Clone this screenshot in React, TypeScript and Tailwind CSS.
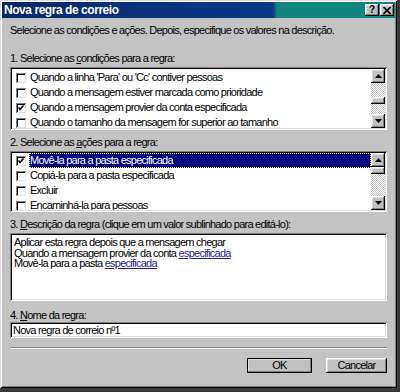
import React from 'react';

const raised =
  'shadow-[inset_-1px_-1px_#000,inset_1px_1px_#fff,inset_-2px_-2px_#808080,inset_2px_2px_#dfdfdf]';
const sunken =
  'shadow-[inset_1px_1px_#808080,inset_-1px_-1px_#fff,inset_2px_2px_#000,inset_-2px_-2px_#dfdfdf]';

function Check({ checked }: { checked?: boolean }) {
  return (
    <span className="relative mr-[3px] h-[10px] w-[10px] shrink-0 bg-white shadow-[inset_1px_1px_#808080,inset_-1px_-1px_#dfdfdf,inset_2px_2px_#000]">
      {checked && (
        <svg viewBox="0 0 10 10" className="absolute left-0 top-0 h-[10px] w-[10px]">
          <path d="M2.5 4.5 L4 6.5 L7.5 2.5" fill="none" stroke="#000" strokeWidth="1.6" />
        </svg>
      )}
    </span>
  );
}

function Arrow({ up }: { up?: boolean }) {
  return (
    <div className={`flex h-[14px] w-[14px] items-center justify-center bg-[#c0c0c0] ${raised}`}>
      <svg viewBox="0 0 7 4" className="h-[4px] w-[7px]">
        <path d={up ? 'M0 4 L3.5 0 L7 4 Z' : 'M0 0 L3.5 4 L7 0 Z'} fill="#000" />
      </svg>
    </div>
  );
}

function ScrollBar({ thumbTop }: { thumbTop: number }) {
  return (
    <div className="flex w-[14px] shrink-0 flex-col bg-[#e6e6e6] bg-[repeating-conic-gradient(#fff_0_25%,#c0c0c0_0_50%)] bg-[length:2px_2px]">
      <Arrow up />
      <div className="flex-1" style={{ paddingTop: thumbTop }}>
        <div className={`h-[7px] w-[14px] bg-[#c0c0c0] ${raised}`} />
      </div>
      <Arrow />
    </div>
  );
}

function Row({ text, checked, selected }: { text: string; checked?: boolean; selected?: boolean }) {
  return (
    <div className="flex h-[15px] items-center pl-[4px]">
      <Check checked={checked} />
      <span
        className={`flex h-[15px] flex-1 items-center whitespace-nowrap pl-[1px] ${
          selected ? 'bg-[#000080] text-white outline-1 outline-dotted outline-[#ffff80] -outline-offset-1' : ''
        }`}
      >
        {text}
      </span>
    </div>
  );
}

function Label({ n, before, key1, after }: { n: string; before: string; key1: string; after: string }) {
  return (
    <div className="h-[12px] leading-[12px]">
      {n} {before}
      <span className="underline underline-offset-1">{key1}</span>
      {after}
    </div>
  );
}

export default function App() {
  return (
    <div className="h-[392px] w-[400px] overflow-hidden bg-[#3a3a3a] font-['Liberation_Sans',Arial,sans-serif] text-[11px] tracking-[-0.75px] text-black">
      <div className="flex h-[388px] w-[397px] flex-col bg-[#c3c3c3] shadow-[inset_1px_1px_#dfdfdf,inset_-1px_-1px_#000,inset_2px_2px_#fff,inset_-2px_-2px_#808080]">
        {/* barra de título */}
        <div className="mx-[2px] mt-[2px] flex h-[16px] items-center justify-between bg-[linear-gradient(to_right,#082468_0%,#0a2e78_25%,#0a3a82_69%,#118480_70%,#118480_100%)] pl-[2px] pr-[1px]">
          <span className="text-[12px] font-bold tracking-[-0.45px] text-white">Nova regra de correio</span>
          <div className="flex gap-[1px]">
            <div className={`flex h-[12px] w-[14px] items-center justify-center bg-[#c0c0c0] text-[10px] font-bold leading-none tracking-normal ${raised}`}>
              ?
            </div>
            <div className={`flex h-[12px] w-[14px] items-center justify-center bg-[#c0c0c0] ${raised}`}>
              <svg viewBox="0 0 8 7" className="h-[7px] w-[8px]">
                <path d="M0.5 0 L7.5 7 M7.5 0 L0.5 7" stroke="#000" strokeWidth="1.6" />
              </svg>
            </div>
          </div>
        </div>

        <div className="flex flex-1 flex-col pl-[10px] pr-[10px]">
          <div className="mt-[6px] h-[12px] leading-[12px]">
            Selecione as condições e ações. Depois, especifique os valores na descrição.
          </div>

          <div className="mt-[16px]">
            <Label n="1." before="Selecione as " key1="c" after="ondições para a regra:" />
          </div>
          <div className={`mt-[3px] flex h-[63px] bg-white p-[2px] ${sunken}`}>
            <div className="flex-1 overflow-hidden pt-[1px]">
              <Row text="Quando a linha 'Para' ou 'Cc' contiver pessoas" />
              <Row text="Quando a mensagem estiver marcada como prioridade" />
              <Row text="Quando a mensagem provier da conta especificada" checked />
              <Row text="Quando o tamanho da mensagem for superior ao tamanho" />
            </div>
            <ScrollBar thumbTop={14} />
          </div>

          <div className="mt-[6px]">
            <Label n="2." before="Selecione as " key1="a" after="ções para a regra:" />
          </div>
          <div className={`mt-[3px] flex h-[61px] bg-white p-[2px] ${sunken}`}>
            <div className="flex-1 overflow-hidden">
              <Row text="Movê-la para a pasta especificada" checked selected />
              <Row text="Copiá-la para a pasta especificada" />
              <Row text="Excluir" />
              <Row text="Encaminhá-la para pessoas" />
            </div>
            <ScrollBar thumbTop={0} />
          </div>

          <div className="mt-[6px] h-[12px] leading-[12px]">
            3. <span className="underline underline-offset-1">D</span>escrição da regra (clique em um valor sublinhado para
            editá-lo):
          </div>
          <div className={`mt-[3px] h-[68px] bg-white px-[4px] pt-[4px] leading-[10.5px] ${sunken}`}>
            <div>Aplicar esta regra depois que a mensagem chegar</div>
            <div>
              Quando a mensagem provier da conta{' '}
              <span className="text-[#1c1c9c] underline">especificada</span>
            </div>
            <div>
              Movê-la para a pasta <span className="text-[#1c1c9c] underline">especificada</span>
            </div>
          </div>

          <div className="mt-[8px]">
            <Label n="4." before="" key1="N" after="ome da regra:" />
          </div>
          <div className={`mt-[1px] flex h-[16px] items-center bg-white px-[3px] ${sunken}`}>Nova regra de correio nº1</div>

          <div className="mt-[9px] h-[2px] border-t border-[#808080] border-b border-b-white" />

          <div className="mt-[9px] flex justify-end gap-[14px]">
            <button className={`h-[15px] w-[65px] bg-[#c0c0c0] leading-none outline outline-1 outline-black -outline-offset-1 ${raised}`}>
              OK
            </button>
            <button className={`h-[15px] w-[61px] bg-[#c0c0c0] leading-none ${raised}`}>Cancelar</button>
          </div>
        </div>
      </div>
    </div>
  );
}
